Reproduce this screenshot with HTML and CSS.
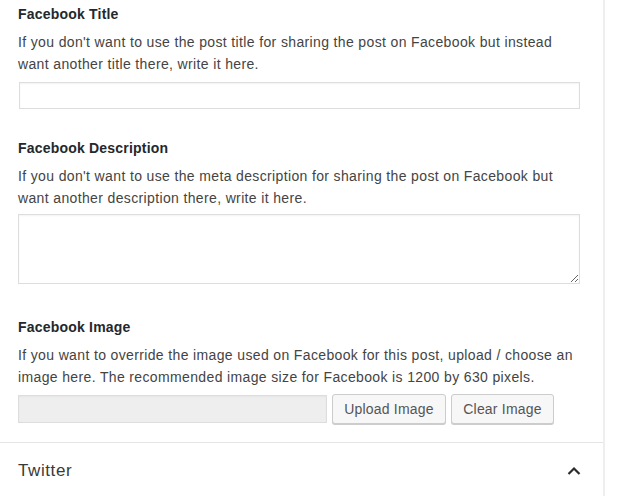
FILE: index.html
```html
<!DOCTYPE html>
<html>
<head>
<meta charset="utf-8">
<link rel="stylesheet" href="styles.css">
</head>
<body>
<div class="page">
  <div class="panel">
    <div class="fields">
      <div class="field">
        <label class="label">Facebook Title</label>
        <p class="desc">If you don't want to use the post title for sharing the post on Facebook but instead want another title there, write it here.</p>
        <input class="text-input" type="text">
      </div>
      <div class="field field-desc">
        <label class="label">Facebook Description</label>
        <p class="desc">If you don't want to use the meta description for sharing the post on Facebook but want another description there, write it here.</p>
        <textarea class="textarea"></textarea>
      </div>
      <div class="field field-image">
        <label class="label">Facebook Image</label>
        <p class="desc">If you want to override the image used on Facebook for this post, upload / choose an image here. The recommended image size for Facebook is 1200 by 630 pixels.</p>
        <div class="image-row">
          <input class="image-input" type="text" readonly>
          <button class="btn btn-upload">Upload Image</button>
          <button class="btn btn-clear">Clear Image</button>
        </div>
      </div>
    </div>
    <div class="section-head">
      <span class="section-title">Twitter</span>
      <svg class="chevron" width="14" height="10" viewBox="0 0 14 10"><path d="M1.5 8 L7 2.5 L12.5 8" fill="none" stroke="#2c2c2c" stroke-width="2.2"/></svg>
    </div>
  </div>
</div>
</body>
</html>
```
FILE: styles.css
```css
html, body {
  margin: 0;
  padding: 0;
  background: #fff;
}
body {
  font-family: "Liberation Sans", Arial, sans-serif;
  color: #444;
  width: 617px;
  height: 496px;
  overflow: hidden;
}
.page {
  display: flex;
}
.panel {
  width: 603px;
  border-right: 2px solid #eeeeee;
  min-height: 496px;
}
.fields {
  padding: 4px 0 18px 18px;
  border-bottom: 1px solid #e5e5e5;
  width: 585px;
}
.field {
  display: flex;
  flex-direction: column;
}
.label {
  font-size: 14px;
  font-weight: bold;
  line-height: 20px;
  color: #23282d;
  letter-spacing: 0.2px;
}
.desc {
  margin: 8px 0 0;
  font-size: 14px;
  line-height: 21.5px;
  color: #444;
  width: 562px;
  letter-spacing: 0.36px;
}
.text-input {
  margin: 7px 0 0 1px;
  width: 561px;
  height: 27px;
  box-sizing: border-box;
  border: 1px solid #dddddd;
  box-shadow: inset 0 1px 2px rgba(0,0,0,0.05);
  background: #fff;
  padding: 0;
}
.field-desc {
  margin-top: 29px;
}
.textarea {
  margin: 5px 0 0;
  width: 562px;
  height: 70px;
  box-sizing: border-box;
  border: 1px solid #dddddd;
  box-shadow: inset 0 1px 2px rgba(0,0,0,0.05);
  resize: vertical;
  padding: 0;
}
.field-image {
  margin-top: 33px;
}
.image-row {
  margin-top: 6px;
  display: flex;
  align-items: flex-start;
  gap: 5px;
}
.image-input {
  margin-top: 1px;
  width: 309px;
  height: 28px;
  box-sizing: border-box;
  border: 1px solid #dddddd;
  background: #eeeeee;
  padding: 0;
  box-shadow: inset 0 1px 2px rgba(0,0,0,0.04);
}
.btn {
  height: 30px;
  box-sizing: border-box;
  border: 1px solid #cccccc;
  border-radius: 3px;
  background: #f7f7f7;
  box-shadow: 0 1px 0 #cccccc;
  font-family: "Liberation Sans", Arial, sans-serif;
  font-size: 14px;
  letter-spacing: 0.2px;
  color: #555;
  padding: 0;
  line-height: 28px;
}
.btn-upload {
  width: 114px;
}
.btn-clear {
  width: 103px;
}
.section-head {
  display: flex;
  align-items: center;
  justify-content: space-between;
  height: 55px;
  padding: 0 22px 0 18px;
}
.section-title {
  font-size: 17px;
  letter-spacing: 0.6px;
  color: #3a3a3a;
}
.chevron {
  display: block;
}
```
